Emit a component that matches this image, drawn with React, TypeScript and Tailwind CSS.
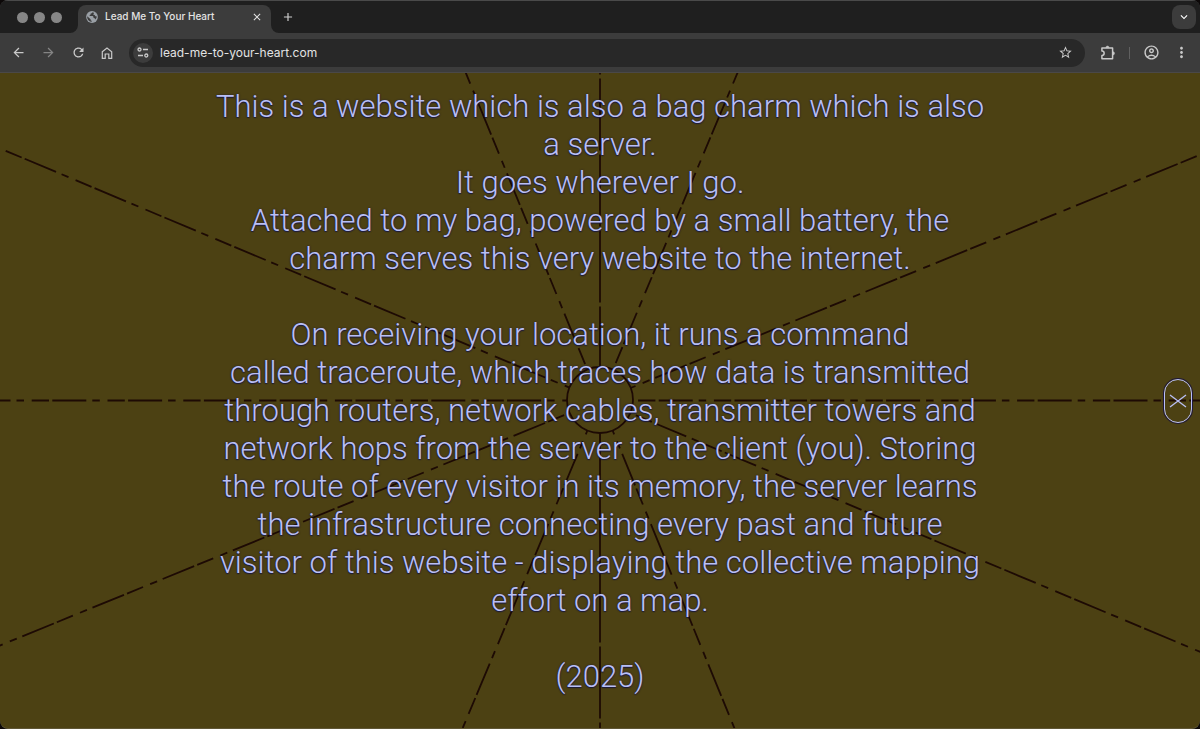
import { MdArrowBack, MdArrowForward, MdRefresh, MdStarBorder, MdOutlineAccountCircle, MdMoreVert, MdClose, MdAdd, MdExpandMore } from "react-icons/md";

const INWARD = "17.3 3.3 34 6 7.5 7.7";
const OUTWARD = "34 3.3 17.3 7.7 7.5 6";
const SOLID = "72 4";

const RAYS = [
  { from: [0, 329], to: [1200, 329], dash: INWARD, offset: 44.1 },
  { from: [5.7, 79.3], to: [600, 329], dash: INWARD, offset: 0 },
  { from: [1196.7, 84.7], to: [600, 329], dash: INWARD, offset: 0 },
  { from: [569.5, 341.5], to: [-10, 578], dash: INWARD, offset: 70 },
  { from: [630.5, 341.5], to: [1210, 584.5], dash: INWARD, offset: 70 },
  { from: [462.4, -7], to: [600, 329], dash: OUTWARD, offset: 34 },
  { from: [741, -7], to: [600, 329], dash: OUTWARD, offset: 34 },
  { from: [587.2, 359.5], to: [460, 663], dash: OUTWARD, offset: 51 },
  { from: [612.8, 359.5], to: [737, 663], dash: OUTWARD, offset: 51 },
  { from: [600, 0], to: [600, 296], dash: SOLID, offset: 69 },
  { from: [600, 362], to: [600, 663], dash: SOLID, offset: 15 },
];

const INTRO = [
  "This is a website which is also a bag charm which is also",
  "a server.",
  "It goes wherever I go.",
  "Attached to my bag, powered by a small battery, the",
  "charm serves this very website to the internet.",
];

const DETAILS = [
  "On receiving your location, it runs a command",
  "called traceroute, which traces how data is transmitted",
  "through routers, network cables, transmitter towers and",
  "network hops from the server to the client (you). Storing",
  "the route of every visitor in its memory, the server learns",
  "the infrastructure connecting every past and future",
  "visitor of this website - displaying the collective mapping",
  "effort on a map.",
];

function Lines({ lines }: { lines: string[] }) {
  return (
    <p>
      {lines.map((line) => (
        <span key={line} className="block">
          {line}
        </span>
      ))}
    </p>
  );
}

function Rays() {
  return (
    <svg className="absolute inset-0 h-full w-full" viewBox="0 1 1200 656" preserveAspectRatio="xMidYMid slice" fill="none" stroke="#1d0a04" strokeWidth="1.8" aria-hidden="true">
      {RAYS.map((r, i) => (
        <line key={i} x1={r.from[0]} y1={r.from[1]} x2={r.to[0]} y2={r.to[1]} strokeDasharray={r.dash} strokeDashoffset={r.offset} />
      ))}
      <circle cx="600" cy="328.5" r="33" fill="#4c4113" />
    </svg>
  );
}

function GlobeIcon() {
  return (
    <svg className="size-3 shrink-0" viewBox="0 0 12 12" aria-hidden="true">
      <circle cx="6" cy="6" r="5.9" fill="#9aa0a6" />
      <path d="M1.2 5.2 4.6 8.3v1l1 .5v1.1A4.9 4.9 0 0 1 1.2 5.2Z" fill="#3c3c3c" />
      <path d="M6.6 1.2c-.4.4-.3.9-1 1.1l-.9.3v1l-1.1.4.2.9h2.9l.7.8v1.1l1.1.2.6 1.6A4.9 4.9 0 0 0 10.9 5.6l-1.5-.3-.8-1.3-1.3-.3.3-.9.6-.9Z" fill="#3c3c3c" />
    </svg>
  );
}

function HomeIcon() {
  return (
    <svg className="size-3" viewBox="0 0 12 12" fill="none" stroke="currentColor" strokeWidth="1.2" aria-hidden="true">
      <path d="M1.3 4.7 6 1l4.7 3.7v6.7H7.8V7H4.2v4.4H1.3Z" />
    </svg>
  );
}

function TuneIcon() {
  return (
    <svg className="h-[11px] w-3" viewBox="0 0 12 11" fill="none" stroke="currentColor" strokeWidth="1.3" aria-hidden="true">
      <circle cx="2.5" cy="2.5" r="1.5" />
      <path d="M6 2.5h5M1 8.5h5" />
      <circle cx="9.3" cy="8.5" r="1.5" />
    </svg>
  );
}

function PuzzleIcon() {
  return (
    <svg className="size-4" viewBox="0 0 15 15" fill="none" stroke="currentColor" strokeWidth="1.4" strokeLinejoin="round" aria-hidden="true">
      <path d="M1.8 2.8h10v10h-10V9.900a2.100 2.100 0 0 0 0-4.200Z" />
      <path d="M5.500 2.500a1.500 1.500 0 0 1 3 0ZM12.100 6.300a1.500 1.500 0 0 1 0 3Z" fill="currentColor" strokeWidth=".5" />
    </svg>
  );
}

export default function App() {
  return (
    <div className="min-h-screen bg-[#0c0808] font-['Inter',sans-serif]">
      <div className="flex min-h-screen flex-col overflow-hidden rounded-[8px] bg-[#3c3c3c]">
        <header>
          <div className="flex h-[33px] items-end border-t border-[#4a4a4a] bg-[#1f1f1f] pr-1 pl-[17px]">
            <div className="flex gap-[6px] self-center" aria-hidden="true">
              <span className="size-[11px] rounded-full bg-[#868686]" />
              <span className="size-[11px] rounded-full bg-[#868686]" />
              <span className="size-[11px] rounded-full bg-[#868686]" />
            </div>
            <svg className="ml-2 size-2" viewBox="0 0 8 8" aria-hidden="true">
              <path d="M8 0v8H0a8 8 0 0 0 8-8Z" fill="#3c3c3c" />
            </svg>
            <div className="flex h-7 w-[193px] items-center rounded-t-[8px] bg-[#3c3c3c] px-2 pb-[5px] text-[#e3e3e3]">
              <GlobeIcon />
              <span className="ml-[7px] flex-1 text-[10px] font-medium whitespace-nowrap">Lead Me To Your Heart</span>
              <button type="button" aria-label="Close tab" className="text-[12px]">
                <MdClose />
              </button>
            </div>
            <svg className="size-2" viewBox="0 0 8 8" aria-hidden="true">
              <path d="M0 0v8h8a8 8 0 0 1-8-8Z" fill="#3c3c3c" />
            </svg>
            <button type="button" aria-label="New tab" className="ml-[2px] self-center text-[14px] text-[#d0d0d0]">
              <MdAdd />
            </button>
            <button type="button" aria-label="Search tabs" className="ml-auto flex size-6 items-center justify-center self-center rounded-[8px] bg-[#3c3c3c] text-[14px] text-white">
              <MdExpandMore />
            </button>
          </div>
          <div className="flex h-10 items-center border-b border-[#4a4848] pr-[10px] pl-[11px] text-[15px] text-[#c9c9c9]">
            <div className="flex items-center gap-[15px]">
              <button type="button" aria-label="Back">
                <MdArrowBack />
              </button>
              <button type="button" aria-label="Forward" className="text-[#848484]">
                <MdArrowForward />
              </button>
              <button type="button" aria-label="Reload">
                <MdRefresh />
              </button>
              <button type="button" aria-label="Home">
                <HomeIcon />
              </button>
            </div>
            <div className="ml-4 flex h-7 flex-1 items-center rounded-full bg-[#282828] pr-3 pl-1">
              <button type="button" aria-label="Site information" className="flex size-5 items-center justify-center rounded-full bg-[#3c3c3c]">
                <TuneIcon />
              </button>
              <input aria-label="Address" defaultValue="lead-me-to-your-heart.com" className="ml-[7px] min-w-0 flex-1 bg-transparent text-[12px] text-[#e3e3e3] outline-none" />
              <button type="button" aria-label="Bookmark this page">
                <MdStarBorder />
              </button>
            </div>
            <div className="ml-[15px] flex items-center">
              <button type="button" aria-label="Extensions">
                <PuzzleIcon />
              </button>
              <span className="mx-[13px] h-3 w-px bg-[#606060]" />
              <button type="button" aria-label="Profile" className="text-[17px]">
                <MdOutlineAccountCircle />
              </button>
              <button type="button" aria-label="Menu" className="ml-[13px] text-[17px]">
                <MdMoreVert />
              </button>
            </div>
          </div>
        </header>
        <main className="relative flex-1 overflow-hidden rounded-b-[8px] border-b border-[#5f5635] bg-[#4c4113]">
          <Rays />
          <article className="relative mx-auto flex max-w-[800px] flex-col gap-[38px] pt-[15px] pb-7 text-center font-['Roboto',sans-serif] text-[31px] leading-[38px] font-light whitespace-nowrap text-[#b9bff5] [text-shadow:0_0_2px_#1b1a3c,0_1px_1px_#1b1a3c]">
            <Lines lines={INTRO} />
            <Lines lines={DETAILS} />
            <p>(2025)</p>
          </article>
          <button type="button" aria-label="Close" className="absolute top-1/2 right-2 flex h-11 w-7 -translate-y-1/2 items-center justify-center rounded-full border border-[#b9bff5] text-[#b9bff5] shadow-[0_0_0_1px_#1f1838]">
            <svg className="h-[14px] w-[18px]" viewBox="0 0 18 14" fill="none" stroke="currentColor" strokeWidth="1.3" aria-hidden="true">
              <path d="m1 1 16 12M17 1 1 13" />
            </svg>
          </button>
        </main>
      </div>
    </div>
  );
}
